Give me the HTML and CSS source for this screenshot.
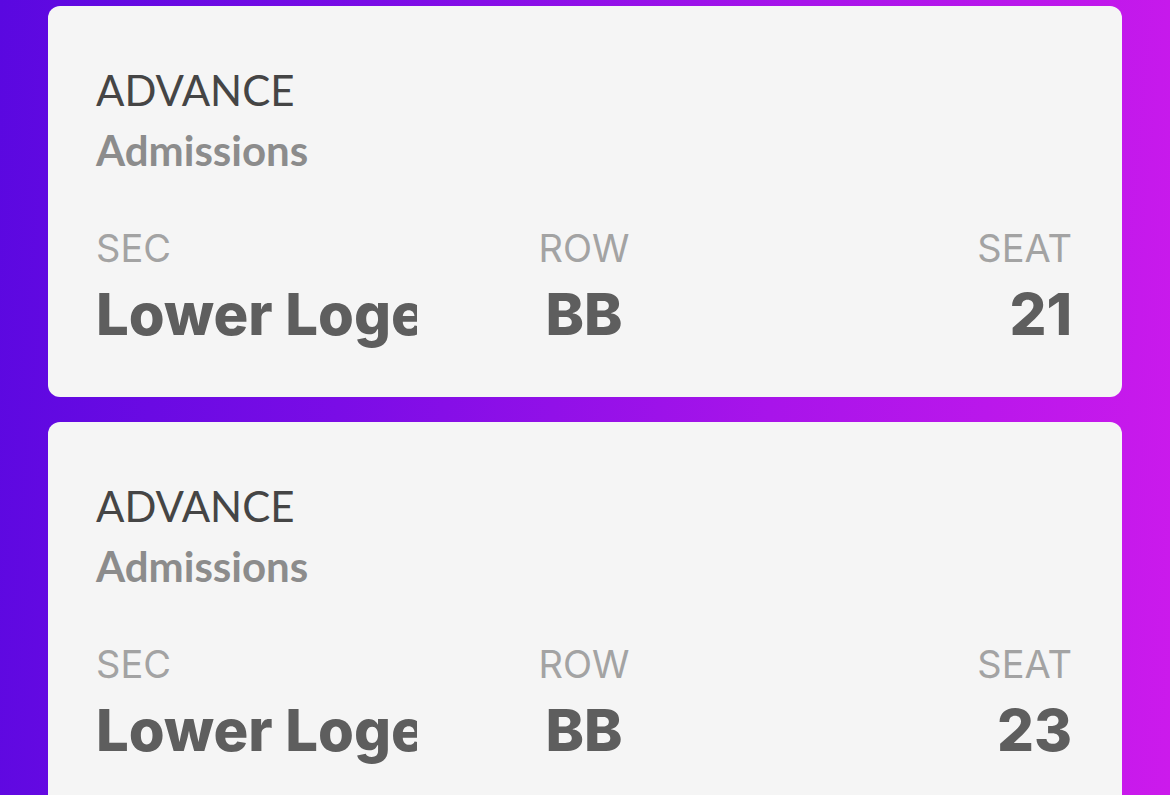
FILE: index.html
```html
<!DOCTYPE html>
<html lang="en">
<head>
<meta charset="utf-8">
<title>Tickets</title>
<link rel="stylesheet" href="styles.css">
</head>
<body>
<main class="list">
  <section class="ticket">
    <div class="ticket-type">ADVANCE</div>
    <div class="ticket-kind">Admissions</div>
    <div class="seats">
      <div class="cell cell-sec">
        <div class="label">SEC</div>
        <div class="value">Lower Loge</div>
      </div>
      <div class="cell cell-row">
        <div class="label">ROW</div>
        <div class="value">BB</div>
      </div>
      <div class="cell cell-seat">
        <div class="label">SEAT</div>
        <div class="value">21</div>
      </div>
    </div>
  </section>
  <section class="ticket">
    <div class="ticket-type">ADVANCE</div>
    <div class="ticket-kind">Admissions</div>
    <div class="seats">
      <div class="cell cell-sec">
        <div class="label">SEC</div>
        <div class="value">Lower Loge</div>
      </div>
      <div class="cell cell-row">
        <div class="label">ROW</div>
        <div class="value">BB</div>
      </div>
      <div class="cell cell-seat">
        <div class="label">SEAT</div>
        <div class="value">23</div>
      </div>
    </div>
  </section>
</main>
</body>
</html>
```

FILE: styles.css
```css
html, body {
  margin: 0;
  padding: 0;
  height: 100%;
  overflow: hidden;
}
body {
  background: linear-gradient(95deg, #5a08e0 0%, #7a0ce6 30%, #a814ea 65%, #cc1aec 100%);
  font-family: "Inter", "Liberation Sans", sans-serif;
}
.list {
  display: flex;
  flex-direction: column;
  gap: 25px;
  padding: 6px 48px 0 48px;
}
.ticket {
  background: #f5f5f5;
  border-radius: 12px;
  padding: 54px 50px 48px 48px;
  flex-shrink: 0;
}
.ticket-type {
  font-family: "Lato", "Liberation Sans", sans-serif;
  font-size: 42px;
  font-weight: 400;
  line-height: 60px;
  color: #454545;
}
.ticket-kind {
  font-family: "Lato", "Liberation Sans", sans-serif;
  font-size: 42px;
  font-weight: 700;
  line-height: 60px;
  color: #8c8c8c;
}
.seats {
  display: grid;
  grid-template-columns: minmax(0, 1fr) minmax(0, 1fr) minmax(0, 1fr);
  margin-top: 45px;
}
.cell {
  min-width: 0;
  overflow: hidden;
  white-space: nowrap;
}
.cell-sec .value {
  max-width: 321px;
  overflow: hidden;
}
.cell-row {
  text-align: center;
}
.cell-seat {
  text-align: right;
}
.label {
  font-size: 38px;
  line-height: 46px;
  font-weight: 400;
  color: #a3a3a3;
  margin-bottom: 8px;
}
.value {
  font-size: 58px;
  line-height: 70px;
  font-weight: 800;
  color: #5e5e5e;
}
```
